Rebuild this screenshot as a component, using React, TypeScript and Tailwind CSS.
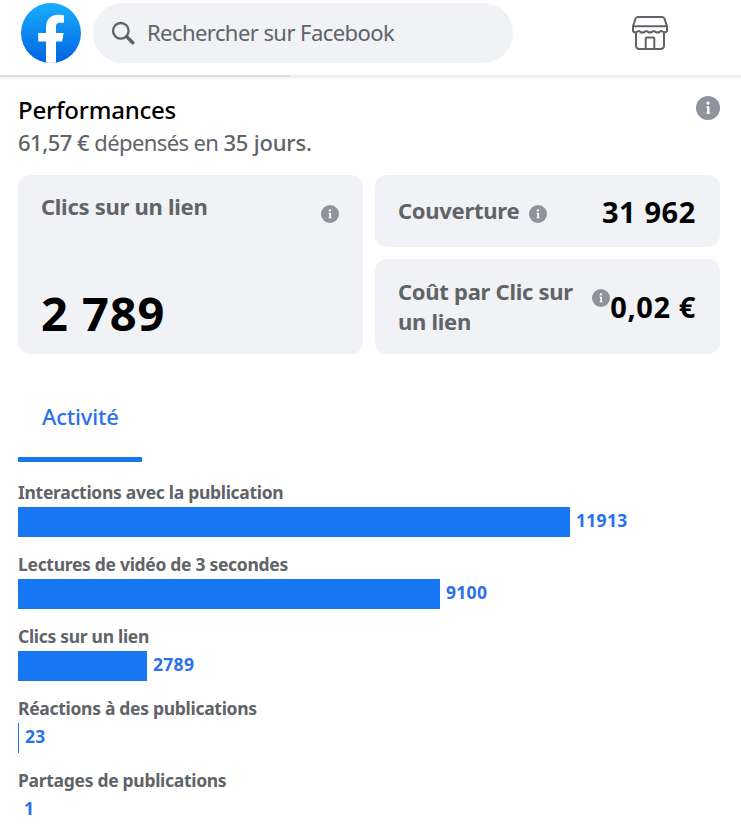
interface InfoIconProps {
  className: string;
}

function InfoIcon({ className }: InfoIconProps) {
  return (
    <svg viewBox="0 0 24 24" className={className} aria-hidden="true">
      <circle cx="12" cy="12" r="12" fill="#8d949e" />
      <circle cx="12" cy="7.1" r="1.6" fill="#fff" />
      <path d="M10.2 10.2h3.2v6.200h.8v1.400h-4v-1.400h.8v-4.800h-.8z" fill="#fff" />
    </svg>
  );
}

function FacebookLogo() {
  return (
    <svg viewBox="0 0 60 60" className="size-[60px] shrink-0" aria-hidden="true">
      <defs>
        <linearGradient id="fb" x1="0" y1="0" x2="0" y2="1">
          <stop offset="0" stopColor="#19aeff" />
          <stop offset="1" stopColor="#0163e0" />
        </linearGradient>
        <clipPath id="disc">
          <circle cx="30" cy="30" r="30" />
        </clipPath>
      </defs>
      <g clipPath="url(#disc)">
        <rect width="60" height="60" fill="url(#fb)" />
        <path
          d="M25 60V38.500h-7.800V30H25v-4.500C25 16.500 29 11.700 37.300 11.700c2 0 4.300.3 5.600.6v7.400h-3.700c-3.600 0-4.200 1.800-4.200 4.400V30h7.700l-1.600 8.500H35V60z"
          fill="#fff"
        />
      </g>
    </svg>
  );
}

function SearchIcon() {
  return (
    <svg
      viewBox="0 0 24 24"
      className="size-6 shrink-0"
      fill="none"
      stroke="#606367"
      aria-hidden="true"
    >
      <circle cx="9.8" cy="9.8" r="7.8" strokeWidth="2.3" />
      <path d="m15.8 15.800 6 6" strokeWidth="3.4" strokeLinecap="round" />
    </svg>
  );
}

function StoreIcon() {
  return (
    <svg
      viewBox="0 0 36 34"
      className="h-[34px] w-9"
      fill="none"
      stroke="#606367"
      strokeWidth="2"
      strokeLinejoin="round"
      aria-hidden="true"
    >
      <path d="M6 1h24a2.6 2.6 0 0 1 2.500 1.800L35 10.400v4.100c0 1.200-1 1.800-2.200 1.800-2 0-2.400-1.300-3.500-1.300s-1.800 1.600-3.800 1.600-2.600-1.600-3.700-1.600-1.800 1.600-3.800 1.600-2.600-1.600-3.700-1.600-1.800 1.600-3.800 1.600S7.900 15 6.800 15s-1.500 1.300-3.500 1.300C2 16.300 1 15.700 1 14.500v-4.100l2.500-7.600A2.600 2.600 0 0 1 6 1z" />
      <path d="M1.300 10.300h33.400" />
      <path d="M4 16v13.600A3.200 3.200 0 0 0 7.200 33h21.600a3.200 3.200 0 0 0 3.200-3.400V16" />
      <path d="M13.700 33V22.600c0-.6.4-1 1-1h6.600c.6 0 1 .4 1 1V33" />
    </svg>
  );
}

interface ActivityRowProps {
  label: string;
  value: number;
  width: number;
}

const activity: ActivityRowProps[] = [
  { label: "Interactions avec la publication", value: 11913, width: 552 },
  { label: "Lectures de vidéo de 3 secondes", value: 9100, width: 422 },
  { label: "Clics sur un lien", value: 2789, width: 129 },
  { label: "Réactions à des publications", value: 23, width: 1 },
  { label: "Partages de publications", value: 1, width: 0 },
];

function ActivityRow({ label, value, width }: ActivityRowProps) {
  return (
    <li className="h-[72px]">
      <p className="h-[27px] text-[17.5px] leading-6 font-bold tracking-[-0.3px] text-[#606367]">
        {label}
      </p>
      <div className="flex h-[30px]">
        <div className="bg-[#1877f2]" style={{ width }} />
        <span className="pl-1.5 text-[17.5px] leading-[26px] font-bold tracking-[0.3px] text-[#2a70ee]">
          {value}
        </span>
      </div>
    </li>
  );
}

export default function App() {
  return (
    <div className="h-[840px] w-[741px] overflow-hidden bg-white font-['Noto_Sans','Open_Sans',sans-serif] text-[#606367]">
      <header className="flex h-[75px] items-start pt-[3px] pl-[21px]">
        <FacebookLogo />
        <div className="ml-3 flex h-[60px] w-[420px] items-center rounded-full bg-[#f0f2f5] pl-[18px]">
          <SearchIcon />
          <span className="mb-0.5 ml-3 text-[22px] leading-8 tracking-[-0.57px]">
            Rechercher sur Facebook
          </span>
        </div>
        <div className="mt-[13px] ml-[119px]">
          <StoreIcon />
        </div>
      </header>
      <div className="h-[2px] bg-[#eceef0] shadow-[0_1px_3px_#e8eaec]">
        <div className="h-full w-[290px] bg-[#dcdfe1]" />
      </div>

      <main className="pr-[21px] pl-[18px]">
        <section className="flex justify-between pt-[17px]">
          <div>
            <h1 className="text-2xl leading-8 font-medium tracking-[-0.22px] text-black">
              Performances
            </h1>
            <p className="mb-px text-[22px] leading-8 tracking-[-0.6px]">
              <span className="font-medium tracking-[-0.5px]">61,57 €</span> dépensés en{" "}
              <span className="font-medium tracking-[-0.2px]">35 jours</span>.
            </p>
          </div>
          <InfoIcon className="mt-[2px] size-6" />
        </section>

        <section className="mt-4 flex gap-3 text-[22px] font-bold tracking-[-0.28px]">
          <div className="flex h-[179px] w-[345px] flex-col justify-between rounded-xl bg-[#f0f2f5] pt-[15px] pr-6 pb-[17px] pl-[23px]">
            <div className="flex justify-between">
              <h2 className="leading-8">Clics sur un lien</h2>
              <InfoIcon className="mt-[15px] size-[18px]" />
            </div>
            <p className="text-[47px] leading-[48px] tracking-[0.9px] text-black">2 789</p>
          </div>

          <div className="flex w-[345px] flex-col gap-3">
            <div className="flex h-[72px] items-center rounded-xl bg-[#f0f2f5] pr-6 pl-[23px]">
              <h2 className="mb-0.5 w-[121px] leading-8">Couverture</h2>
              <InfoIcon className="mt-[6px] ml-[10px] size-[18px]" />
              <p className="mt-px ml-auto text-[29px] leading-10 tracking-[0.6px] text-black">
                31 962
              </p>
            </div>
            <div className="flex h-[95px] items-center rounded-xl bg-[#f0f2f5] pr-6 pl-[23px]">
              <h2 className="mb-0.5 w-[194px] leading-[30px]">Coût par Clic sur un lien</h2>
              <InfoIcon className="mb-[18px] size-[18px] shrink-0" />
              <p className="ml-auto text-[29px] leading-10 tracking-[0.6px] whitespace-nowrap text-black">
                0,02 €
              </p>
            </div>
          </div>
        </section>

        <nav className="mt-[46px] h-[62px] w-[124px] border-b-[5px] border-[#1877f2] pl-[24px]">
          <span className="text-[22px] leading-8 font-medium tracking-[-0.2px] text-[#2a70ee]">
            Activité
          </span>
        </nav>

        <ul className="mt-[18px]">
          {activity.map((row) => (
            <ActivityRow key={row.label} {...row} />
          ))}
        </ul>
      </main>
    </div>
  );
}
